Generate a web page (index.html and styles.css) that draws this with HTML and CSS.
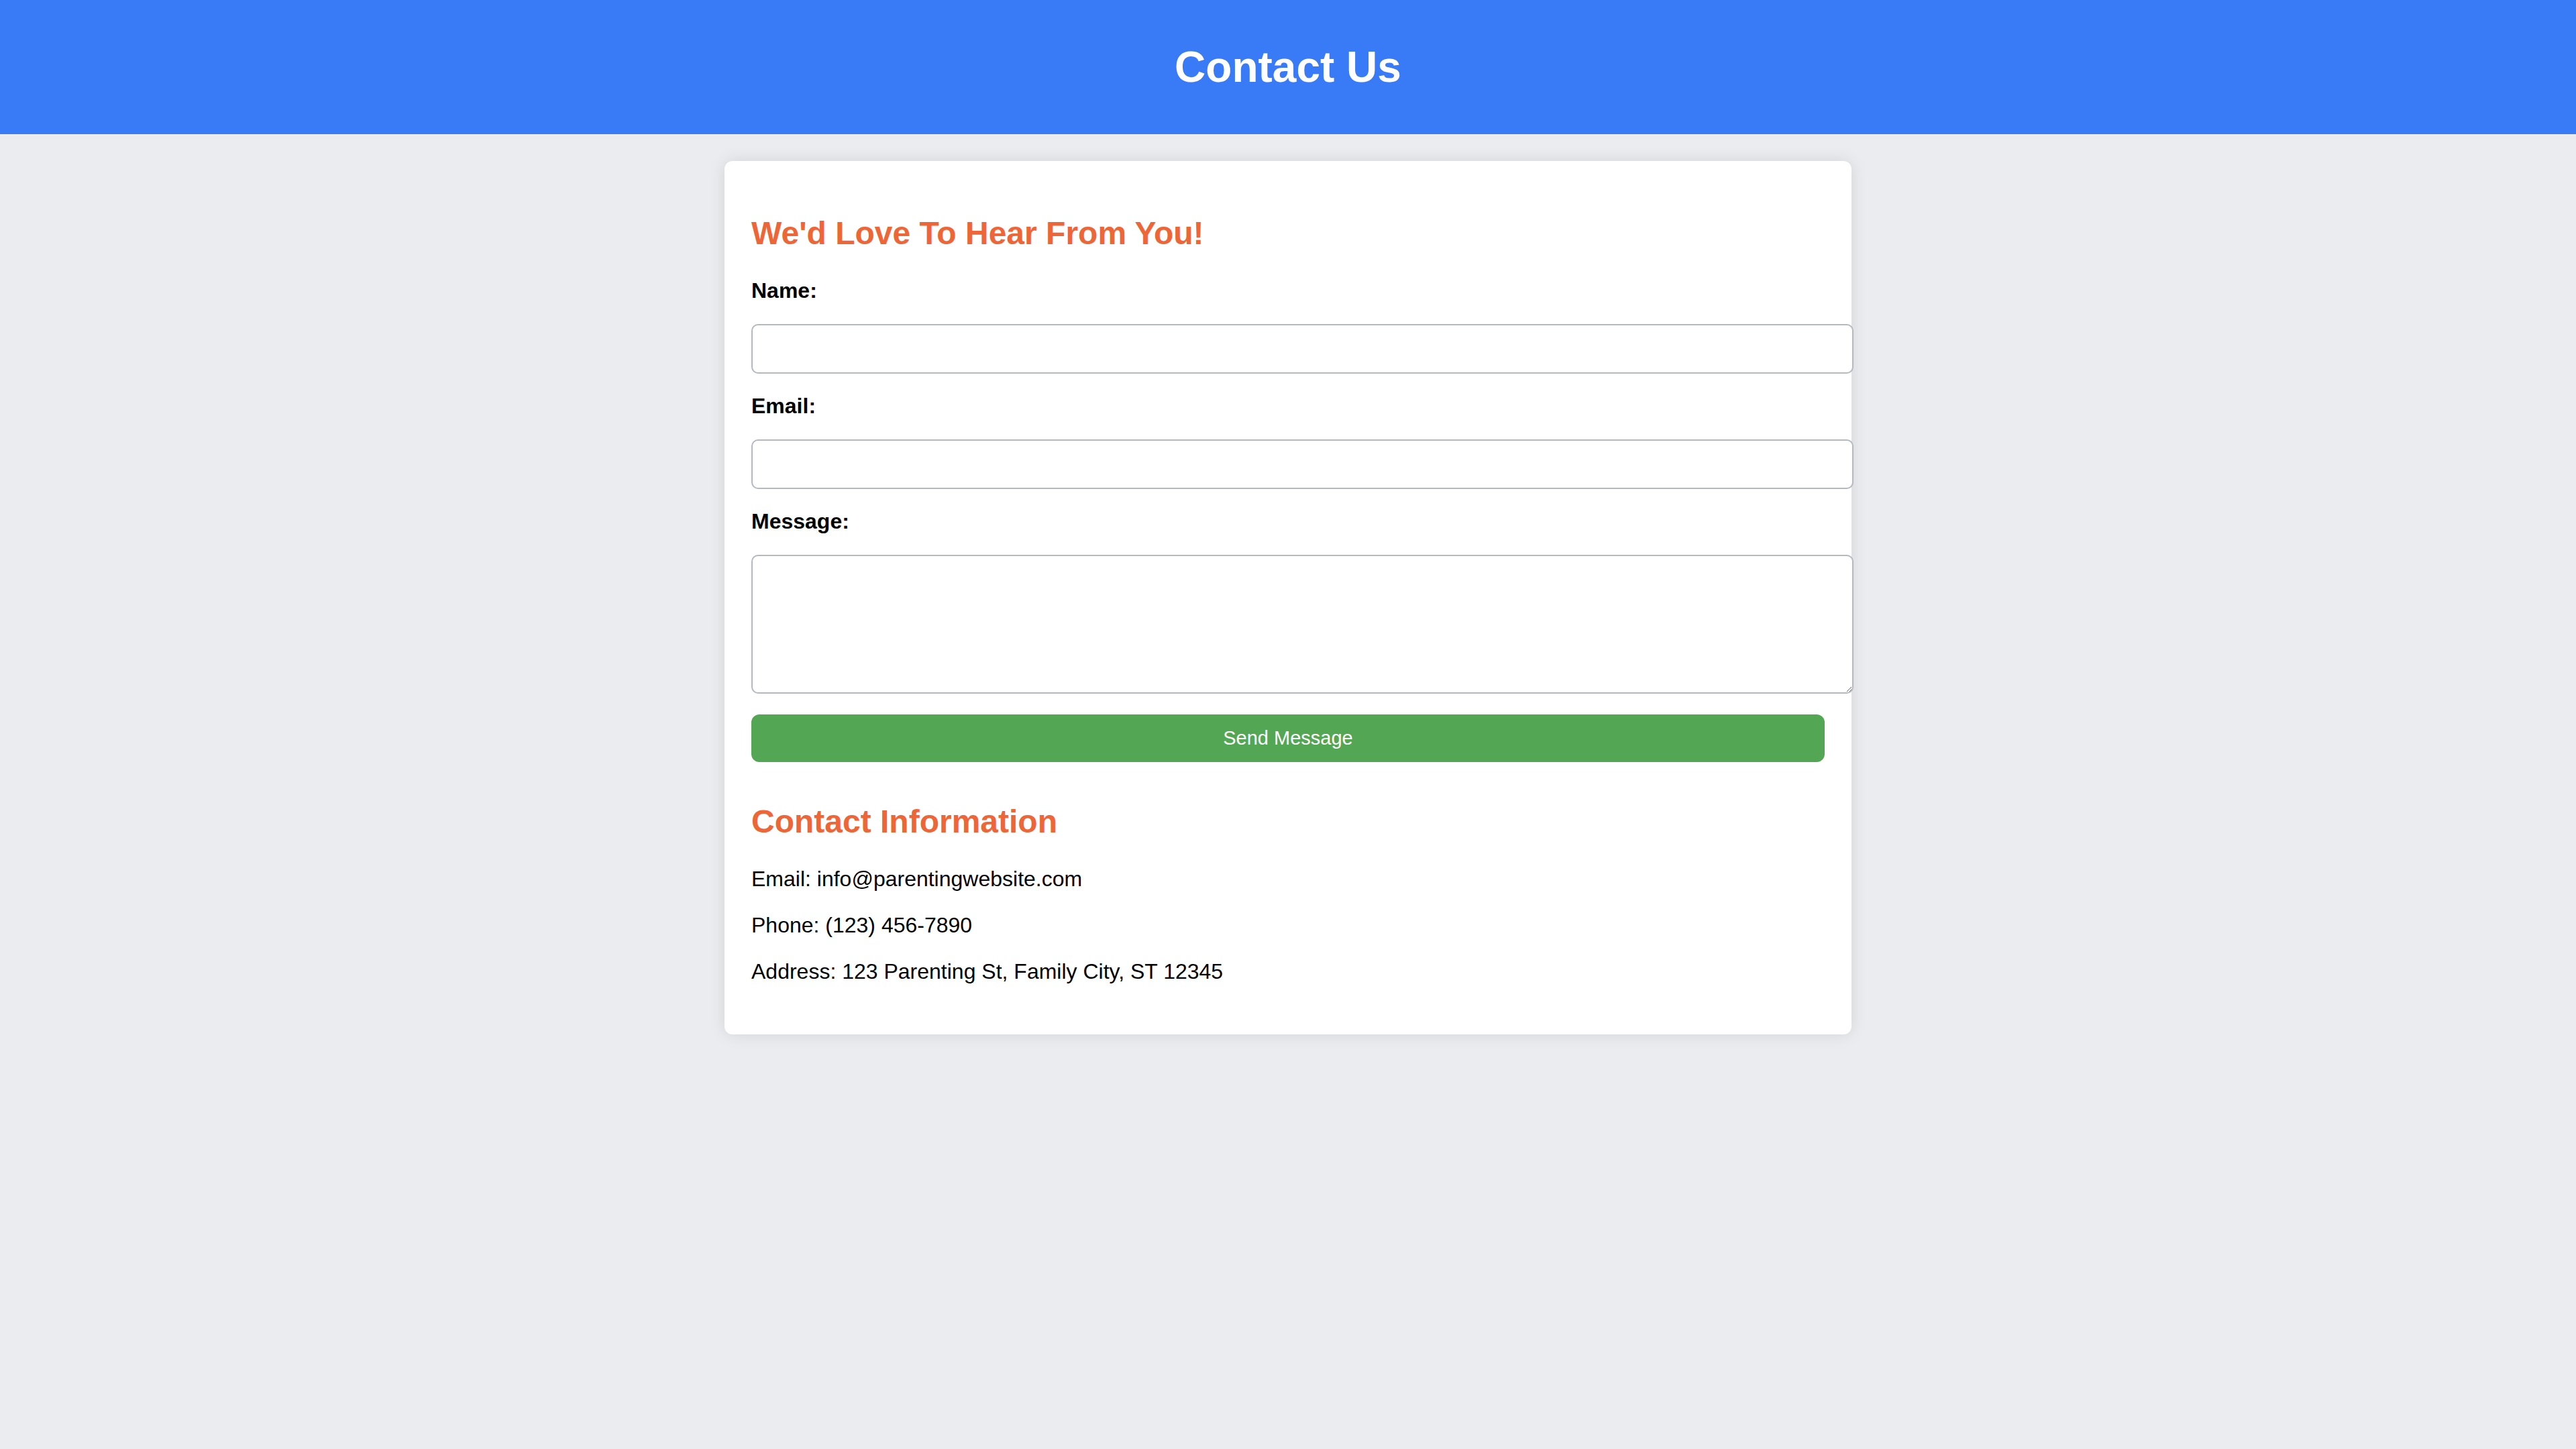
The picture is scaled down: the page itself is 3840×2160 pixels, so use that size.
FILE: index.html
```html
<!DOCTYPE html>
<html lang="en">
<head>
<meta charset="utf-8">
<title>Contact Us</title>
<link rel="stylesheet" href="styles.css">
</head>
<body>
<header class="site-header">
  <h1 class="site-title">Contact Us</h1>
</header>
<main class="card">
  <h2 class="section-title">We'd Love To Hear From You!</h2>
  <form class="contact-form">
    <label class="field-label" for="name">Name:</label>
    <input class="field-input" type="text" id="name" name="name">
    <label class="field-label" for="email">Email:</label>
    <input class="field-input" type="email" id="email" name="email">
    <label class="field-label" for="message">Message:</label>
    <textarea class="field-input field-textarea" id="message" name="message"></textarea>
    <button class="send-button" type="submit">Send Message</button>
  </form>
  <h2 class="section-title info-title">Contact Information</h2>
  <p class="info-line">Email: info@parentingwebsite.com</p>
  <p class="info-line">Phone: (123) 456-7890</p>
  <p class="info-line">Address: 123 Parenting St, Family City, ST 12345</p>
</main>
</body>
</html>
```
FILE: styles.css
```css
body {
  margin: 0;
  background: #eaecf0;
  font-family: "Liberation Sans", Arial, sans-serif;
  color: #000;
}

.site-header {
  height: 200px;
  background: #397bf6;
  display: flex;
  align-items: center;
  justify-content: center;
}

.site-title {
  margin: 0;
  color: #fff;
  font-size: 64px;
  font-weight: bold;
}

.card {
  box-sizing: border-box;
  width: 1680px;
  margin: 40px auto;
  padding: 40px 40px 43px;
  background: #fff;
  border-radius: 12px;
  box-shadow: 0 0 24px rgba(0, 0, 0, 0.1);
}

.section-title {
  margin: 40px 0;
  font-size: 48px;
  font-weight: bold;
  color: #ee6538;
}

.info-title {
  margin-top: 61px;
}

.contact-form {
  margin: 0;
}

.field-label {
  display: block;
  font-size: 32px;
  font-weight: bold;
  margin-bottom: 31px;
}

.field-input {
  display: block;
  box-sizing: border-box;
  width: calc(100% + 43px);
  height: 74px;
  margin: 0 0 30px;
  padding: 0 19px;
  border: 2.4px solid #b4b8bf;
  border-radius: 10px;
  background: #fff;
  font-family: "Liberation Sans", Arial, sans-serif;
  font-size: 32px;
}

.field-textarea {
  height: 207px;
  margin-bottom: 31px;
  padding: 12px 19px;
}

.send-button {
  display: block;
  width: 100%;
  height: 71px;
  border: none;
  border-radius: 12px;
  background: #53a653;
  color: #fff;
  font-family: "Liberation Sans", Arial, sans-serif;
  font-size: 29px;
  cursor: pointer;
}

.info-line {
  margin: 32px 0;
  font-size: 32px;
}
```
